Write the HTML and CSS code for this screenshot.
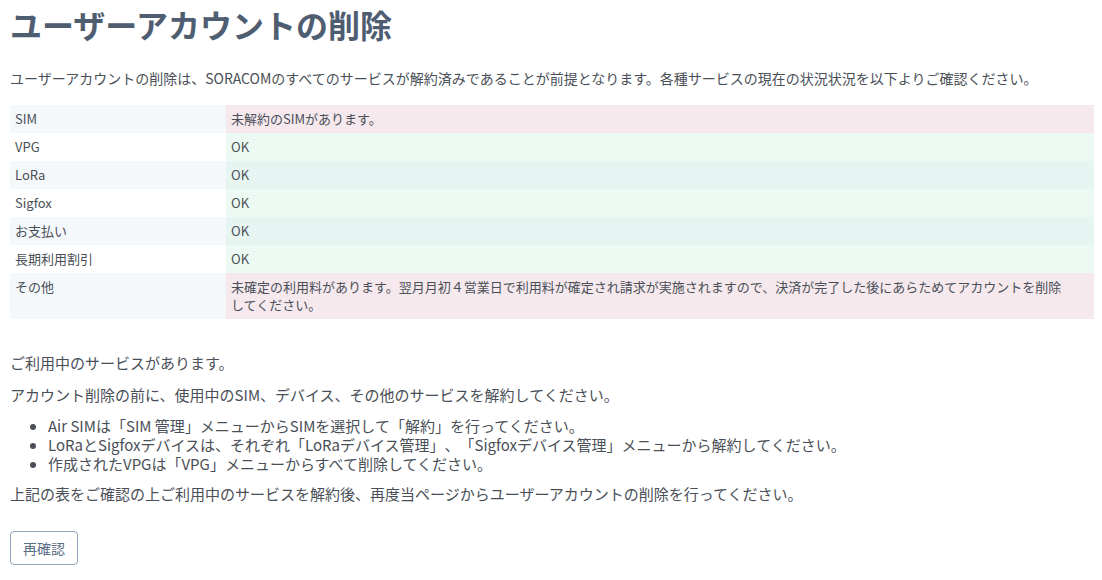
FILE: index.html
```html
<!DOCTYPE html>
<html lang="ja">
<head>
<meta charset="utf-8">
<link rel="stylesheet" href="styles.css">
</head>
<body>
<div class="page">
  <h1 class="title">ユーザーアカウントの削除</h1>
  <p class="lead">ユーザーアカウントの削除は、SORACOMのすべてのサービスが解約済みであることが前提となります。各種サービスの現在の状況状況を以下よりご確認ください。</p>
  <table class="status">
    <tbody>
      <tr><th>SIM</th><td class="ng">未解約のSIMがあります。</td></tr>
      <tr><th>VPG</th><td class="ok">OK</td></tr>
      <tr><th>LoRa</th><td class="ok">OK</td></tr>
      <tr><th>Sigfox</th><td class="ok">OK</td></tr>
      <tr><th>お支払い</th><td class="ok">OK</td></tr>
      <tr><th>長期利用割引</th><td class="ok">OK</td></tr>
      <tr><th>その他</th><td class="ng">未確定の利用料があります。翌月月初４営業日で利用料が確定され請求が実施されますので、決済が完了した後にあらためてアカウントを削除してください。</td></tr>
    </tbody>
  </table>
  <div class="notice">
    <p>ご利用中のサービスがあります。</p>
    <p>アカウント削除の前に、使用中のSIM、デバイス、その他のサービスを解約してください。</p>
    <ul>
      <li>Air SIMは「SIM 管理」メニューからSIMを選択して「解約」を行ってください。</li>
      <li>LoRaとSigfoxデバイスは、それぞれ「LoRaデバイス管理」、「Sigfoxデバイス管理」メニューから解約してください。</li>
      <li>作成されたVPGは「VPG」メニューからすべて削除してください。</li>
    </ul>
    <p>上記の表をご確認の上ご利用中のサービスを解約後、再度当ページからユーザーアカウントの削除を行ってください。</p>
  </div>
  <button class="btn">再確認</button>
</div>
</body>
</html>
```
FILE: styles.css
```css
html, body {
  margin: 0;
  padding: 0;
  background: #fff;
}
body {
  font-family: "Noto Sans CJK JP", "Noto Sans", sans-serif;
  color: #4a4f57;
  text-spacing-trim: space-all;
}
.page {
  padding: 0 8px 0 10px;
}
.title {
  margin: 0;
  padding-top: 2px;
  font-size: 32px;
  line-height: 44px;
  font-weight: 700;
  color: #4f5d70;
}
.lead {
  margin: 22px 0 0;
  font-size: 14px;
  line-height: 20px;
}
.status {
  margin-top: 17px;
  width: 1084px;
  border-collapse: collapse;
  font-size: 13px;
  line-height: 18px;
}
.status th, .status td {
  text-align: left;
  font-weight: 400;
  vertical-align: top;
  padding: 5px 5px;
  height: 18px;
}
.status td {
  padding-right: 24px;
}
.status th {
  width: 206px;
}
.status tr:nth-child(odd) th {
  background: #f5f8fb;
}
.status tr:nth-child(even) th {
  background: #fff;
}
.status td.ok {
  background: #edf9f3;
}
.status tr:nth-child(odd) td.ok {
  background: #e6f5f2;
}
.status td.ng {
  background: #f5e9ee;
}
.notice {
  margin-top: 33px;
  font-size: 15px;
  line-height: 22px;
}
.notice p {
  margin: 0 0 10px;
}
.notice ul {
  margin: 0 0 10px;
  padding-left: 38px;
}
.notice li {
  line-height: 19px;
}
.btn {
  display: block;
  margin-top: 26px;
  font-family: inherit;
  font-size: 14px;
  color: #5a6e85;
  background: #fff;
  border: 1px solid #8fa4bd;
  border-radius: 4px;
  padding: 6px 12px;
  line-height: 20px;
}
```
